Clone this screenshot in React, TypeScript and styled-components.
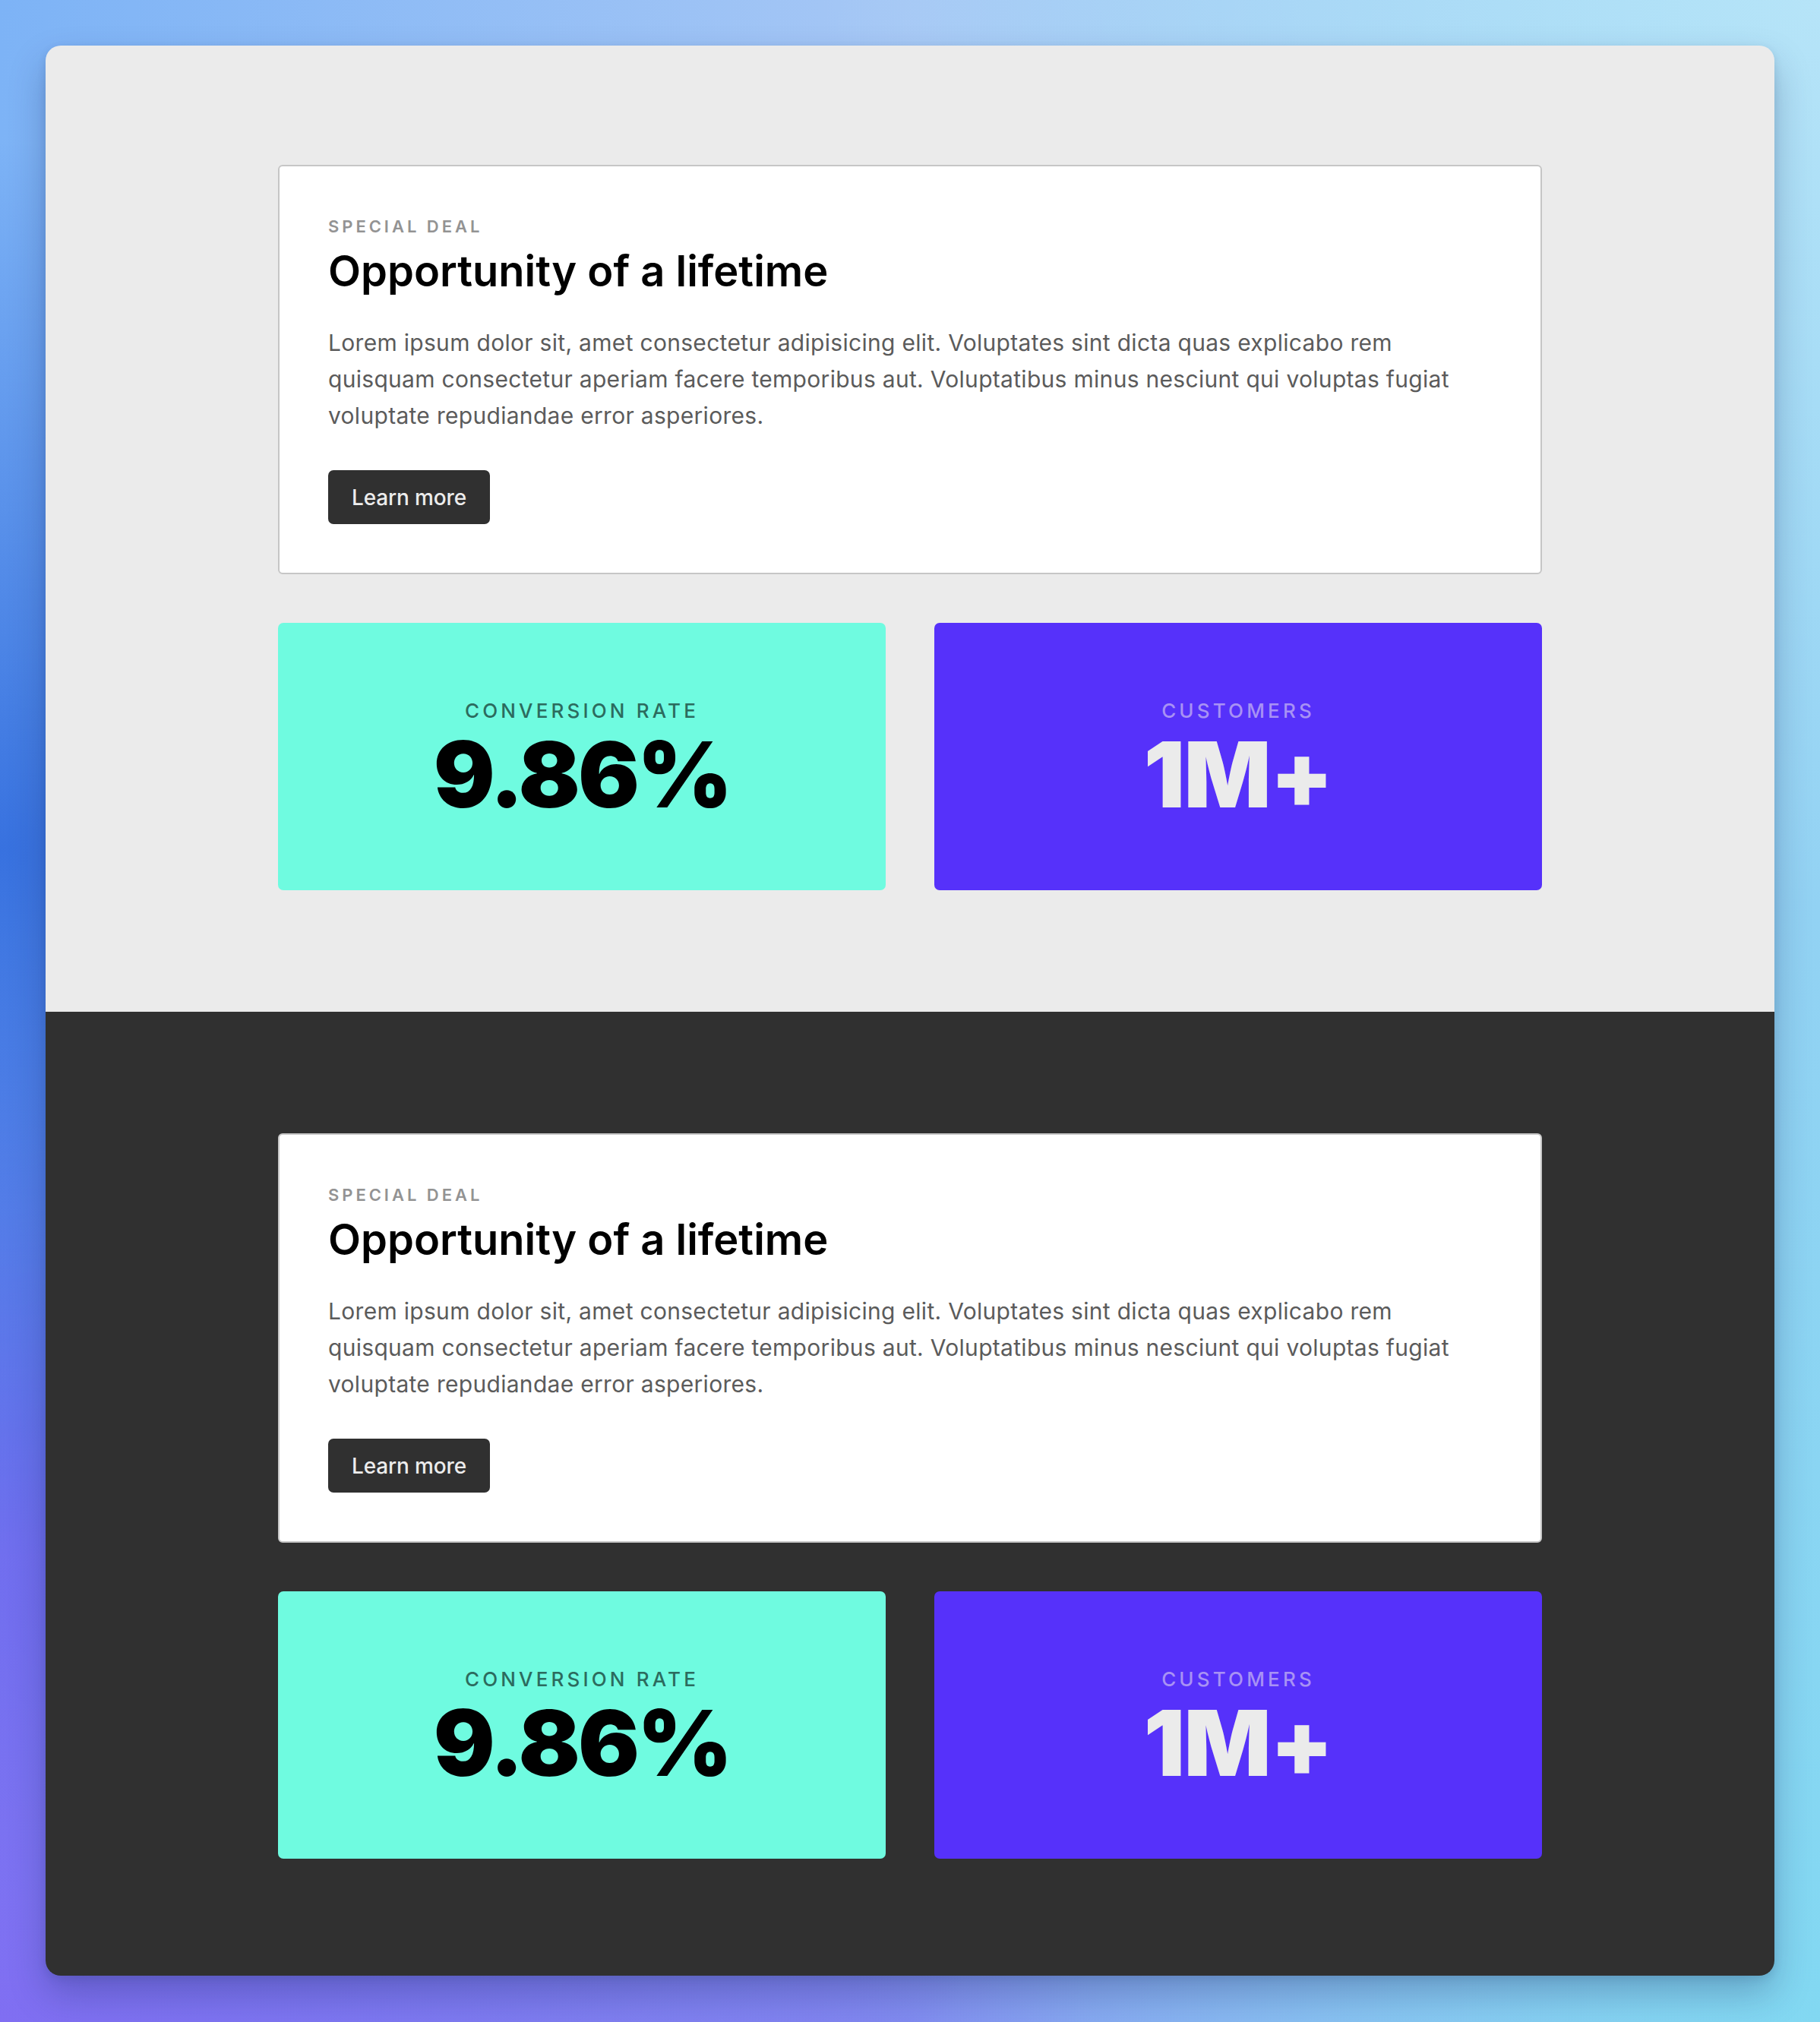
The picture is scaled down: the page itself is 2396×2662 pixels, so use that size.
import React from "react";
import styled, { createGlobalStyle } from "styled-components";

const Global = createGlobalStyle`
  * { box-sizing: border-box; }
  html, body { margin: 0; padding: 0; }
  body {
    font-family: Inter, "Noto Sans", "Liberation Sans", sans-serif;
    min-height: 2662px;
    background:
      radial-gradient(ellipse 55% 35% at 0% 42%, rgba(52, 110, 222, 0.95) 0%, rgba(52, 110, 222, 0) 100%),
      radial-gradient(ellipse 60% 40% at 0% 100%, rgba(128, 110, 242, 1) 0%, rgba(128, 110, 242, 0) 100%),
      radial-gradient(ellipse 50% 40% at 10% 78%, rgba(92, 86, 232, 0.9) 0%, rgba(92, 86, 232, 0) 100%),
      radial-gradient(ellipse 55% 45% at 100% 0%, rgba(182, 228, 248, 1) 0%, rgba(182, 228, 248, 0) 100%),
      radial-gradient(ellipse 55% 55% at 100% 100%, rgba(130, 216, 242, 1) 0%, rgba(130, 216, 242, 0) 100%),
      radial-gradient(ellipse 50% 30% at 50% 100%, rgba(130, 140, 240, 1) 0%, rgba(130, 140, 240, 0) 100%),
      linear-gradient(90deg, #7db3f6 0%, #a6c7f5 50%, #92d2f3 100%);
  }
`;

const Page = styled.div`
  padding: 60px 60px 61px;
`;

const Window = styled.div`
  border-radius: 20px;
  overflow: hidden;
  box-shadow: 0 24px 48px rgba(20, 40, 90, 0.28), 0 4px 12px rgba(20, 40, 90, 0.12);
`;

const Section = styled.section<{ $tone: "light" | "dark" }>`
  background: ${(p) => (p.$tone === "light" ? "#ebebeb" : "#303030")};
  padding: ${(p) => (p.$tone === "light" ? "157px 0 160px" : "160px 0 154px")};
`;

const Container = styled.div`
  width: 1664px;
  margin: 0 auto;
  display: flex;
  flex-direction: column;
  gap: 64px;
`;

const DealCard = styled.article`
  background: #ffffff;
  border: 2px solid #c6c6c6;
  border-radius: 6px;
  padding: 64px;
  display: flex;
  flex-direction: column;
  align-items: flex-start;
`;

const Eyebrow = styled.div`
  font-size: 22px;
  line-height: 30px;
  font-weight: 600;
  letter-spacing: 0.18em;
  text-transform: uppercase;
  color: #939393;
`;

const Title = styled.h2`
  margin: 11px 0 0;
  font-size: 56px;
  line-height: 67px;
  font-weight: 600;
  letter-spacing: 0;
  color: #000000;
`;

const Body = styled.p`
  margin: 36px 0 0;
  font-size: 30px;
  line-height: 48px;
  font-weight: 400;
  letter-spacing: 0.01em;
  color: #5b5b5b;
`;

const Button = styled.button`
  margin-top: 48px;
  height: 71px;
  padding: 0 31px;
  border: none;
  border-radius: 7px;
  background: #303030;
  color: #ececec;
  font-family: inherit;
  font-size: 28px;
  font-weight: 500;
  letter-spacing: -0.005em;
  display: inline-flex;
  align-items: center;
  cursor: pointer;
`;

const StatsGrid = styled.div`
  display: grid;
  grid-template-columns: 1fr 1fr;
  gap: 64px;
`;

const StatCard = styled.div<{ $variant: "teal" | "violet" }>`
  height: 352px;
  border-radius: 7px;
  background: ${(p) => (p.$variant === "teal" ? "#6ffbe0" : "#5631fa")};
  display: flex;
  flex-direction: column;
  align-items: center;
  justify-content: center;
`;

const StatLabel = styled.div<{ $variant: "teal" | "violet" }>`
  font-size: 26px;
  line-height: 28px;
  margin-bottom: 11px;
  font-weight: 500;
  letter-spacing: 0.16em;
  text-transform: uppercase;
  color: ${(p) => (p.$variant === "teal" ? "#2c6b5e" : "#a892f4")};
`;

const StatValue = styled.div<{ $variant: "teal" | "violet" }>`
  font-size: 120px;
  line-height: 100px;
  padding-top: 9px;
  font-weight: 900;
  letter-spacing: ${(p) => (p.$variant === "teal" ? "-0.025em" : "-0.01em")};
  color: ${(p) => (p.$variant === "teal" ? "#000000" : "#ebebeb")};
`;

type Stat = { label: string; value: string; variant: "teal" | "violet" };

const stats: Stat[] = [
  { label: "Conversion rate", value: "9.86%", variant: "teal" },
  { label: "Customers", value: "1M+", variant: "violet" },
];

function Block({ tone }: { tone: "light" | "dark" }) {
  return (
    <Section $tone={tone}>
      <Container>
        <DealCard>
          <Eyebrow>Special deal</Eyebrow>
          <Title>Opportunity of a lifetime</Title>
          <Body>
            Lorem ipsum dolor sit, amet consectetur adipisicing elit. Voluptates sint dicta quas explicabo rem
            quisquam consectetur aperiam facere temporibus aut. Voluptatibus minus nesciunt qui voluptas fugiat
            voluptate repudiandae error asperiores.
          </Body>
          <Button>Learn more</Button>
        </DealCard>
        <StatsGrid>
          {stats.map((s) => (
            <StatCard key={s.label} $variant={s.variant}>
              <StatLabel $variant={s.variant}>{s.label}</StatLabel>
              <StatValue $variant={s.variant}>{s.value}</StatValue>
            </StatCard>
          ))}
        </StatsGrid>
      </Container>
    </Section>
  );
}

export default function App() {
  return (
    <>
      <Global />
      <Page>
        <Window>
          <Block tone="light" />
          <Block tone="dark" />
        </Window>
      </Page>
    </>
  );
}
